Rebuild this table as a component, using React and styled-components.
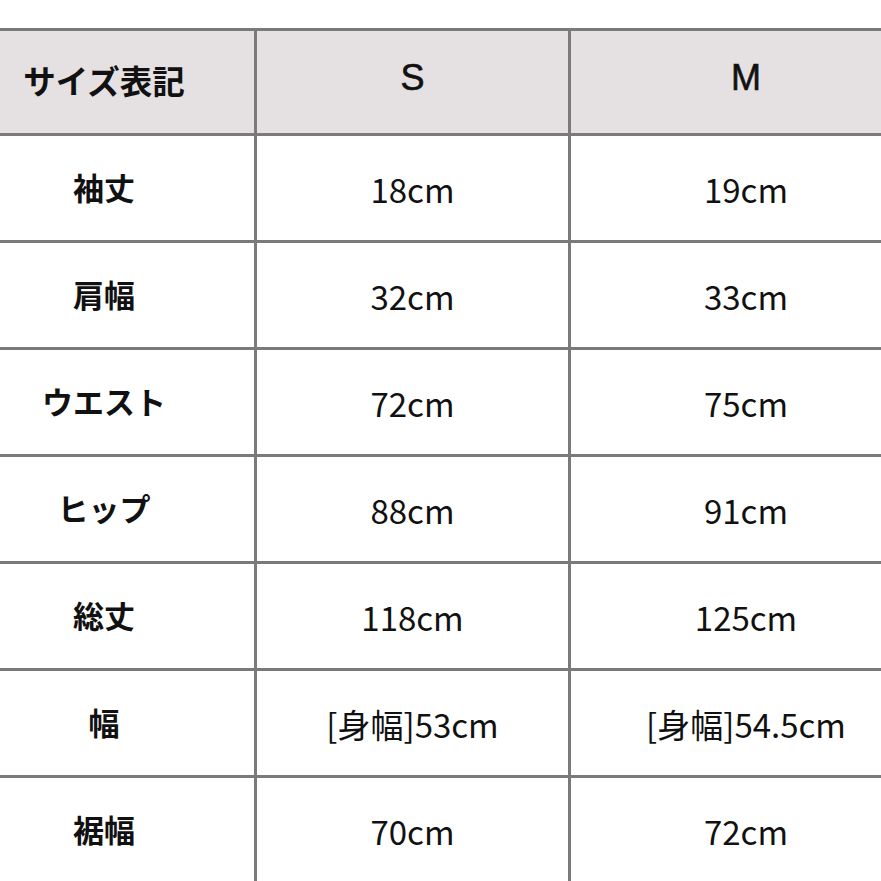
import React from "react";
import styled, { createGlobalStyle } from "styled-components";

const Global = createGlobalStyle`
  html, body { margin: 0; padding: 0; background: #ffffff; }
  body { width: 881px; height: 881px; overflow: hidden; }
`;

const Frame = styled.div`
  width: 881px;
  height: 881px;
  overflow: hidden;
  background: #ffffff;
  padding-top: 28px;
  box-sizing: border-box;
`;

const Table = styled.div`
  display: grid;
  grid-template-columns: 300px 311px 350px;
  grid-template-rows: 102px;
  grid-auto-rows: 104px;
  gap: 3px;
  padding-top: 3px;
  margin-left: -46px;
  width: max-content;
  background: #7a7a7a;
`;

const Cell = styled.div`
  display: flex;
  align-items: center;
  justify-content: center;
  box-sizing: border-box;
  background: ${(p) => (p.$head ? "#e5e1e2" : "#ffffff")};
  color: #111111;
  font-family: "Noto Sans CJK JP", "Noto Sans", sans-serif;
  white-space: nowrap;
`;

const LabelCell = styled(Cell)`
  font-size: ${(p) => (p.$head ? "32.5px" : "31px")};
  font-weight: 700;
  padding-bottom: ${(p) => (p.$head ? "6px" : "4px")};
`;

const SizeCell = styled(Cell)`
  font-family: "Liberation Sans", "Noto Sans", sans-serif;
  font-size: 36px;
  font-weight: 400;
  -webkit-text-stroke: 0.6px #111111;
  padding-bottom: 8px;
`;

const ValueCell = styled(Cell)`
  font-size: 33px;
  font-weight: 400;
  padding-top: 2px;
`;

const rows = [
  ["袖丈", "18cm", "19cm"],
  ["肩幅", "32cm", "33cm"],
  ["ウエスト", "72cm", "75cm"],
  ["ヒップ", "88cm", "91cm"],
  ["総丈", "118cm", "125cm"],
  ["幅", "[身幅]53cm", "[身幅]54.5cm"],
  ["裾幅", "70cm", "72cm"],
];

export default function App() {
  return (
    <>
      <Global />
      <Frame>
        <Table>
          <LabelCell $head>サイズ表記</LabelCell>
          <SizeCell $head>S</SizeCell>
          <SizeCell $head>M</SizeCell>
          {rows.map(([label, s, m]) => (
            <React.Fragment key={label}>
              <LabelCell>{label}</LabelCell>
              <ValueCell>{s}</ValueCell>
              <ValueCell>{m}</ValueCell>
            </React.Fragment>
          ))}
        </Table>
      </Frame>
    </>
  );
}
